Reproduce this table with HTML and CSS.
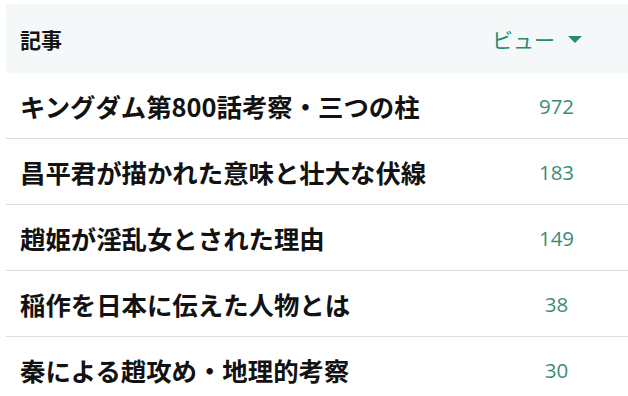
FILE: index.html
```html
<!DOCTYPE html>
<html lang="ja">
<head>
<meta charset="utf-8">
<link rel="stylesheet" href="styles.css">
</head>
<body>
<div class="table">
  <div class="head">
    <div class="h-title">記事</div>
    <div class="h-views">ビュー<span class="arrow"></span></div>
  </div>
  <div class="row"><div class="title">キングダム第800話考察・三つの柱</div><div class="num">972</div></div>
  <div class="row"><div class="title">昌平君が描かれた意味と壮大な伏線</div><div class="num">183</div></div>
  <div class="row"><div class="title">趙姫が淫乱女とされた理由</div><div class="num">149</div></div>
  <div class="row"><div class="title">稲作を日本に伝えた人物とは</div><div class="num">38</div></div>
  <div class="row"><div class="title">秦による趙攻め・地理的考察</div><div class="num">30</div></div>
</div>
</body>
</html>
```
FILE: styles.css
```css
html, body {
  margin: 0;
  padding: 0;
  background: #ffffff;
  overflow: hidden;
}
body {
  padding: 4px 0 0 6px;
  font-family: "Noto Sans CJK JP", "Noto Sans", sans-serif;
}
.table {
  width: 622px;
}
.head, .row {
  display: grid;
  grid-template-columns: 1fr 136px;
  align-items: center;
}
.head {
  height: 69px;
  background: #f5f8f8;
}
.row {
  height: 65px;
  border-bottom: 1px solid #dddddd;
}
.h-title {
  padding-left: 14px;
  font-size: 21px;
  font-weight: 700;
  color: #141414;
}
.h-views {
  padding-left: 0;
  font-size: 21px;
  color: #2a8a70;
  display: flex;
  align-items: center;
  gap: 13px;
}
.arrow {
  width: 0;
  height: 0;
  border-left: 7.5px solid transparent;
  border-right: 7.5px solid transparent;
  border-top: 7px solid #2a8a70;
  margin-top: 2px;
}
.title {
  padding-left: 14px;
  font-size: 25.4px;
  font-weight: 700;
  color: #121212;
  white-space: nowrap;
}
.num {
  text-align: center;
  padding-right: 7px;
  font-family: "Open Sans", "Noto Sans", sans-serif;
  font-size: 20.5px;
  color: #3e8b78;
}
```
